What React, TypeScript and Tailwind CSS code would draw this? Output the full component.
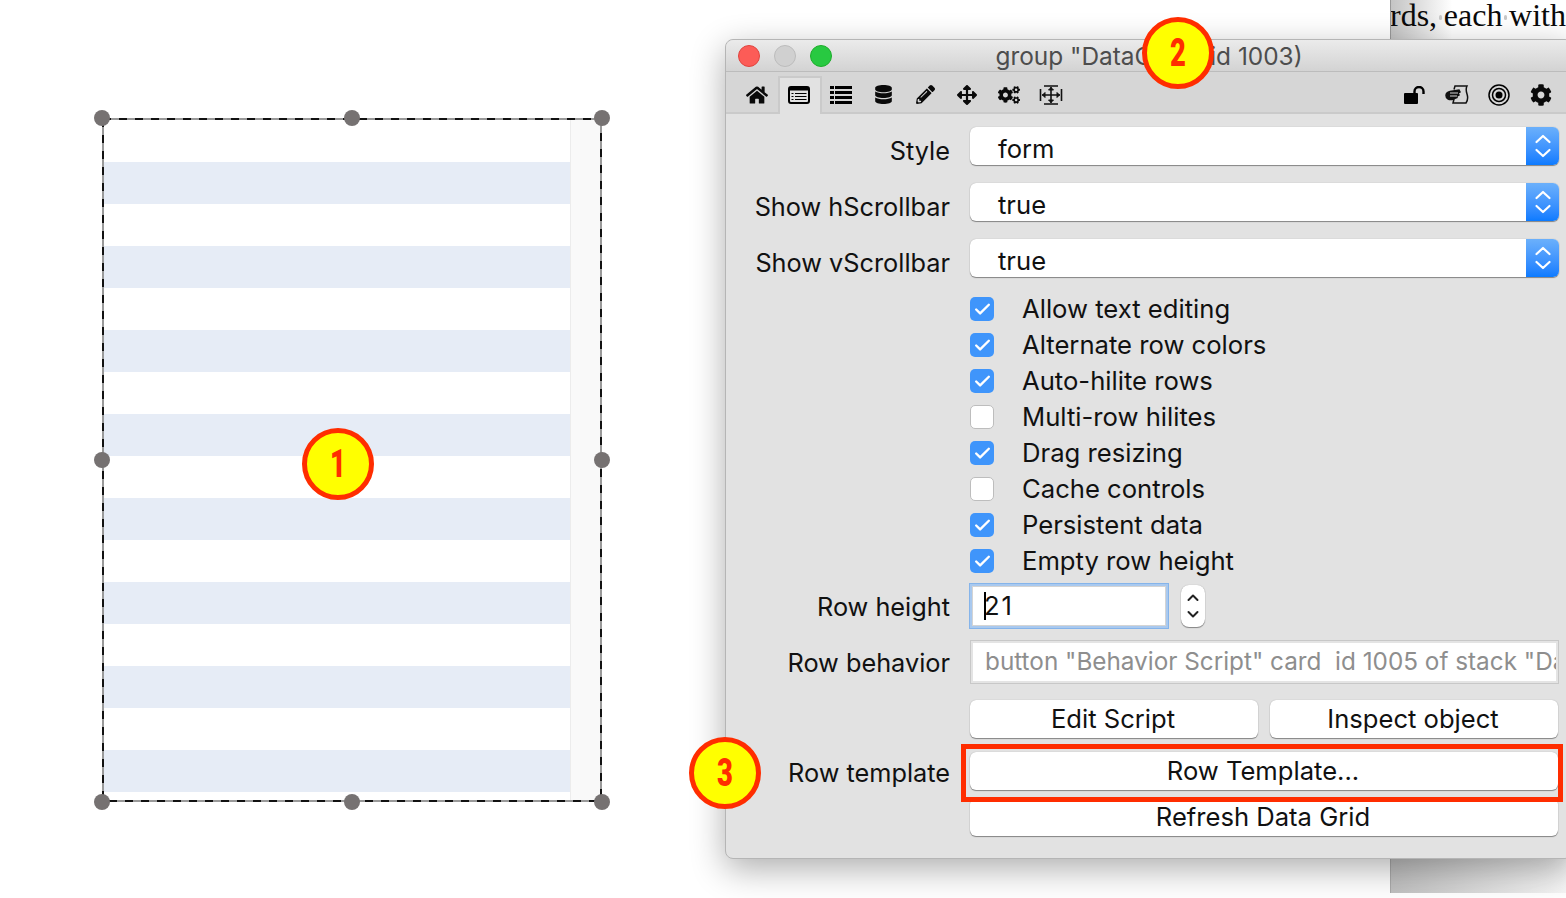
import React from "react";
import { FaHome, FaDatabase, FaPencilAlt, FaArrowsAlt, FaCogs, FaCog } from "react-icons/fa";
import { Check } from "lucide-react";

const sans = "font-['Inter','Noto_Sans',sans-serif]";

function Callout({ n, className }: { n: string; className: string }) {
  return (
    <div className={`absolute z-30 w-[72px] h-[72px] rounded-full bg-[#ffff00] border-[5px] border-[#ff2d00] flex items-center justify-center ${className}`}>
      <span className="font-['Roboto',sans-serif] font-black text-[38px] leading-none text-[#ff2d00] scale-x-[0.72]">{n}</span>
    </div>
  );
}

function Handle({ className }: { className: string }) {
  return <div className={`absolute w-4 h-4 rounded-full bg-[#767272] ${className}`} />;
}

function GridWidget() {
  return (
    <div className="relative w-[498px] h-[682px] shrink-0 ml-[103px] mt-[119px] p-px flex">
      <div className="w-[466px] h-[680px] flex flex-col overflow-hidden">
        {Array.from({ length: 17 }).map((_, i) => (
          <div key={i} className={`h-[42px] shrink-0 ${i % 2 === 1 ? "bg-[#e6ecf6]" : "bg-white"}`} />
        ))}
      </div>
      <div className="flex-1 bg-[#f9f9f9] border-l border-[#ececec]" />
      <svg className="absolute left-[-1px] top-[-1px]" width="500" height="684" fill="none">
        <rect x="1" y="1" width="498" height="682" stroke="#999" strokeWidth="2" />
        <rect x="1" y="1" width="498" height="682" stroke="#111" strokeWidth="2" strokeDasharray="8 8" />
      </svg>
      <Handle className="left-[-9px] top-[-9px]" />
      <Handle className="left-[241px] top-[-9px]" />
      <Handle className="left-[491px] top-[-9px]" />
      <Handle className="left-[-9px] top-[333px]" />
      <Handle className="left-[491px] top-[333px]" />
      <Handle className="left-[-9px] top-[675px]" />
      <Handle className="left-[241px] top-[675px]" />
      <Handle className="left-[491px] top-[675px]" />
    </div>
  );
}

function ResizeIcon() {
  return (
    <svg width="24" height="20" viewBox="0 0 24 20" fill="none" stroke="#111" strokeWidth="1.6">
      <path d="M5 1h14M5 19h14M1.500 4v12M22.500 4v12M3 10h18M12 2v16" />
      <path d="M9.500 5 12 2.500 14.500 5ZM9.500 15l2.500 2.500 2.500-2.500ZM6 7.500 3.500 10 6 12.500ZM18 7.500l2.500 2.500-2.500 2.500Z" fill="#111" strokeWidth="1" />
    </svg>
  );
}

function ScriptIcon() {
  return (
    <svg width="24" height="20" viewBox="0 0 24 20" fill="none" stroke="#111" strokeWidth="1.500">
      <path d="M9 4.500 10 1h12c-1.500 3-1 5 0 8s1 6-1 9H8l1-4" />
      <path d="M1 10.500c0-2.500 2-3.500 4-4l9-1.500 1 2-2 1 1 2-2 1 0 1.500-5 2c-3 .5-6-1-6-4Z" fill="#111" />
      <path d="M5 8h8M5 11h7" stroke="#d6d6d6" strokeWidth="1" />
    </svg>
  );
}

function ListIcon() {
  return (
    <svg width="22" height="18" viewBox="0 0 22 18" fill="#000">
      {[0, 5, 10, 15].map((y) => (
        <g key={y}>
          <rect x="0" y={y} width="4" height="3" />
          <rect x="5" y={y} width="17" height="3" />
        </g>
      ))}
    </svg>
  );
}

function FormIcon() {
  return (
    <svg width="22" height="18" viewBox="0 0 22 18" fill="none">
      <rect x="1" y="1" width="20" height="16" rx="2" stroke="#000" strokeWidth="2" />
      <rect x="1" y="1" width="20" height="3.500" fill="#000" />
      <path d="M3.500 7.500h2M7 7.500h11.500M3.500 10.500h2M7 10.500h11.500M3.500 13.500h2M7 13.500h11.500" stroke="#000" strokeWidth="1.200" />
    </svg>
  );
}

function UnlockIcon() {
  return (
    <svg width="22" height="18" viewBox="0 0 22 18" fill="none">
      <rect x="0" y="7" width="14" height="11" rx="1" fill="#000" />
      <path d="M10.500 8V5.500a4.500 4.500 0 0 1 9 0V8" stroke="#000" strokeWidth="2.400" />
    </svg>
  );
}

function TargetIcon() {
  return (
    <svg width="22" height="22" viewBox="0 0 22 22" fill="none" stroke="#000">
      <circle cx="11" cy="11" r="10" strokeWidth="1.500" />
      <circle cx="11" cy="11" r="6.500" strokeWidth="1.500" />
      <circle cx="11" cy="11" r="3.500" fill="#000" stroke="none" />
    </svg>
  );
}

function Toolbar() {
  const cls = "w-[42px] pt-[5px] flex items-center justify-center";
  return (
    <div className="h-[42px] bg-[#d6d6d6] border-b-2 border-[#cacaca] flex items-stretch pl-[10px] pr-[10px] text-[#0a0a0a]">
      <div className={cls}><FaHome size={22} /></div>
      <div className="w-[44px] -mb-[2px] mt-[4px] bg-[#e2e2e2] border-x-2 border-t-2 border-[#cacaca] flex items-center justify-center pb-[2px] pr-[2px]"><FormIcon /></div>
      <div className={`${cls} -ml-[2px]`}><ListIcon /></div>
      <div className={cls}><FaDatabase size={19} /></div>
      <div className={cls}><FaPencilAlt size={19} /></div>
      <div className={cls}><FaArrowsAlt size={20} /></div>
      <div className={cls}><FaCogs size={22} /></div>
      <div className={cls}><ResizeIcon /></div>
      <div className="flex-1" />
      <div className={cls}><UnlockIcon /></div>
      <div className={cls}><ScriptIcon /></div>
      <div className={cls}><TargetIcon /></div>
      <div className={cls}><FaCog size={22} /></div>
    </div>
  );
}

function Row({ label, className, labelClass, children }: { label?: string; className?: string; labelClass: string; children: React.ReactNode }) {
  return (
    <div className={`flex items-start ${className ?? ""}`}>
      <div className={`w-[224px] mr-[20px] shrink-0 text-right text-[#111] text-[25.3px] whitespace-nowrap ${labelClass}`}>{label}</div>
      {children}
    </div>
  );
}

function Select({ value }: { value: string }) {
  return (
    <div className="w-[589px] h-[38px] rounded-[6px] bg-white shadow-[0_1px_1px_rgba(0,0,0,0.4),0_0_1px_rgba(0,0,0,0.3)] flex items-center overflow-hidden">
      <span className="flex-1 pl-[28px] pt-[6px] text-[#111]">{value}</span>
      <div className="w-[33px] h-full bg-gradient-to-b from-[#6bb0fb] to-[#0a7bff] flex items-center justify-center">
        <svg width="18" height="26" viewBox="0 0 18 26" fill="none" stroke="#fff" strokeWidth="2.200" strokeLinecap="round" strokeLinejoin="round">
          <path d="M2.500 9 9 3l6.500 6M2.500 17 9 23l6.500-6" />
        </svg>
      </div>
    </div>
  );
}

function Checkbox({ label, checked }: { label: string; checked: boolean }) {
  return (
    <div className="flex items-center h-[36px] pl-[244px]">
      {checked ? (
        <div className="w-6 h-6 rounded-[5px] bg-[#3f95fb] flex items-center justify-center">
          <Check size={19} strokeWidth={3} className="text-white" />
        </div>
      ) : (
        <div className="w-6 h-6 rounded-[5px] bg-white border border-[#bdbdbd]" />
      )}
      <span className="ml-[28px] text-[#111] text-[25.65px] whitespace-nowrap">{label}</span>
    </div>
  );
}

function Button({ label, className }: { label: string; className: string }) {
  return (
    <div className={`rounded-[6px] bg-white shadow-[0_1px_1px_rgba(0,0,0,0.4),0_0_1px_rgba(0,0,0,0.3)] flex items-center justify-center pr-[2px] text-[#111] whitespace-nowrap ${className}`}>
      {label}
    </div>
  );
}

function Palette() {
  const checks: [string, boolean][] = [
    ["Allow text editing", true],
    ["Alternate row colors", true],
    ["Auto-hilite rows", true],
    ["Multi-row hilites", false],
    ["Drag resizing", true],
    ["Cache controls", false],
    ["Persistent data", true],
    ["Empty row height", true],
  ];
  return (
    <div className={`relative z-10 ml-[124px] mt-[39px] w-[848px] h-[820px] shrink-0 rounded-[8px] bg-[#e2e2e2] border border-[#b5b5b5] shadow-[0_10px_34px_rgba(0,0,0,0.32)] text-[25.6px] leading-[30px] ${sans}`}>
      <div className="relative h-[32px] rounded-t-[8px] bg-gradient-to-b from-[#ebebeb] to-[#d3d3d3] border-b border-[#bcbcbc] flex items-center justify-center">
        <div className="absolute left-[12px] top-[5px] flex gap-[14px]">
          <div className="w-[22px] h-[22px] rounded-full bg-[#fc5c57] border border-[#e0443e]" />
          <div className="w-[22px] h-[22px] rounded-full bg-[#d0d0d0] border border-[#bcbcbc]" />
          <div className="w-[22px] h-[22px] rounded-full bg-[#28c941] border border-[#1dad2b]" />
        </div>
        <span className="text-[#4d4d4d] text-[24.4px] whitespace-nowrap">group "DataGrid" (id 1003)</span>
      </div>
      <Toolbar />
      <div className="flex flex-col">
        <Row label="Style" className="mt-[13px] h-[38px]" labelClass="pt-[9px]"><Select value="form" /></Row>
        <Row label="Show hScrollbar" className="mt-[18px] h-[38px]" labelClass="pt-[9px]"><Select value="true" /></Row>
        <Row label="Show vScrollbar" className="mt-[18px] h-[38px]" labelClass="pt-[9px]"><Select value="true" /></Row>
        <div className="mt-[14px]">
          {checks.map(([l, c]) => <Checkbox key={l} label={l} checked={c} />)}
        </div>
        <Row label="Row height" className="mt-[4px] h-[46px] !items-center" labelClass="pt-[2px]">
          <div className="-ml-px w-[200px] h-[46px] bg-white border border-[#85b4ea] shadow-[inset_0_0_0_2px_#a9c9ef,inset_0_0_0_3px_#d4d4d4] flex items-center pl-[14px] text-[#111] tracking-[2px]">
            <span className="w-[2px] h-[28px] bg-black -mr-[2px]" />21
          </div>
          <div className="ml-[12px] w-[24px] h-[42px] rounded-[8px] bg-white shadow-[0_1px_1px_rgba(0,0,0,0.4),0_0_1px_rgba(0,0,0,0.3)] flex items-center justify-center">
            <svg width="14" height="30" viewBox="0 0 14 30" fill="none" stroke="#222" strokeWidth="2" strokeLinecap="round" strokeLinejoin="round">
              <path d="M2.500 9 7 4.500 11.500 9M2.500 21 7 25.500 11.500 21" />
            </svg>
          </div>
        </Row>
        <Row label="Row behavior" className="mt-[11px] h-[44px] !items-center" labelClass="pt-[2px]">
          <div className="w-[589px] h-[44px] bg-white border border-[#c8c8c8] shadow-[inset_0_0_0_2px_#e4e4e4] flex items-center pl-[14px] pr-[2px] pb-[2px] text-[#8e8e8e] text-[24.3px] overflow-hidden whitespace-nowrap">
            <span className="block overflow-hidden">button "Behavior Script" card&nbsp; id 1005 of stack "Data Grid"</span>
          </div>
        </Row>
        <div className="flex gap-[12px] mt-[16px] pl-[244px]">
          <Button label="Edit Script" className="w-[288px] h-[38px]" />
          <Button label="Inspect object" className="w-[288px] h-[38px]" />
        </div>
        <Row label="Row template" className="mt-[14px] h-[38px] !items-center" labelClass="pt-[4px]">
          <Button label="Row Template..." className="w-[588px] h-[38px]" />
        </Row>
        <div className="pl-[244px] mt-[8px]">
          <Button label="Refresh Data Grid" className="w-[588px] h-[38px]" />
        </div>
      </div>
      <div className="absolute left-[235px] top-[704px] w-[602px] h-[58px] border-[5px] border-[#ff2d00] z-20" />
      <Callout n="2" className="left-[416px] top-[-23px]" />
      <Callout n="3" className="left-[-37px] top-[697px]" />
    </div>
  );
}

export default function App() {
  return (
    <div className="relative w-[1566px] h-[898px] overflow-hidden bg-white flex items-start">
      <div className="absolute left-[1390px] top-0 w-[176px] h-[40px] bg-gradient-to-r from-[#c4c4c4] to-white to-[35%] overflow-hidden border-l border-[#999]">
        <div className="-ml-[1px] -mt-[1px] font-['Liberation_Serif',serif] text-[32px] leading-[32px] text-[#0a0a0a] whitespace-nowrap flex items-center">
          <span>rds,</span>
          <span className="w-[5px] h-[5px] mx-[2px] mt-[5px] rounded-full bg-[#c8c8c8]" />
          <span>each</span>
          <span className="w-[5px] h-[5px] mx-[2px] mt-[5px] rounded-full bg-[#c8c8c8]" />
          <span>with</span>
        </div>
      </div>
      <div className="absolute left-[1390px] top-[858px] w-[176px] h-[35px] bg-gradient-to-r from-[#c0c0c0] to-[#f6f6f6] border-l border-[#aaa]" />
      <GridWidget />
      <Palette />
      <Callout n="1" className="left-[302px] top-[428px]" />
    </div>
  );
}
